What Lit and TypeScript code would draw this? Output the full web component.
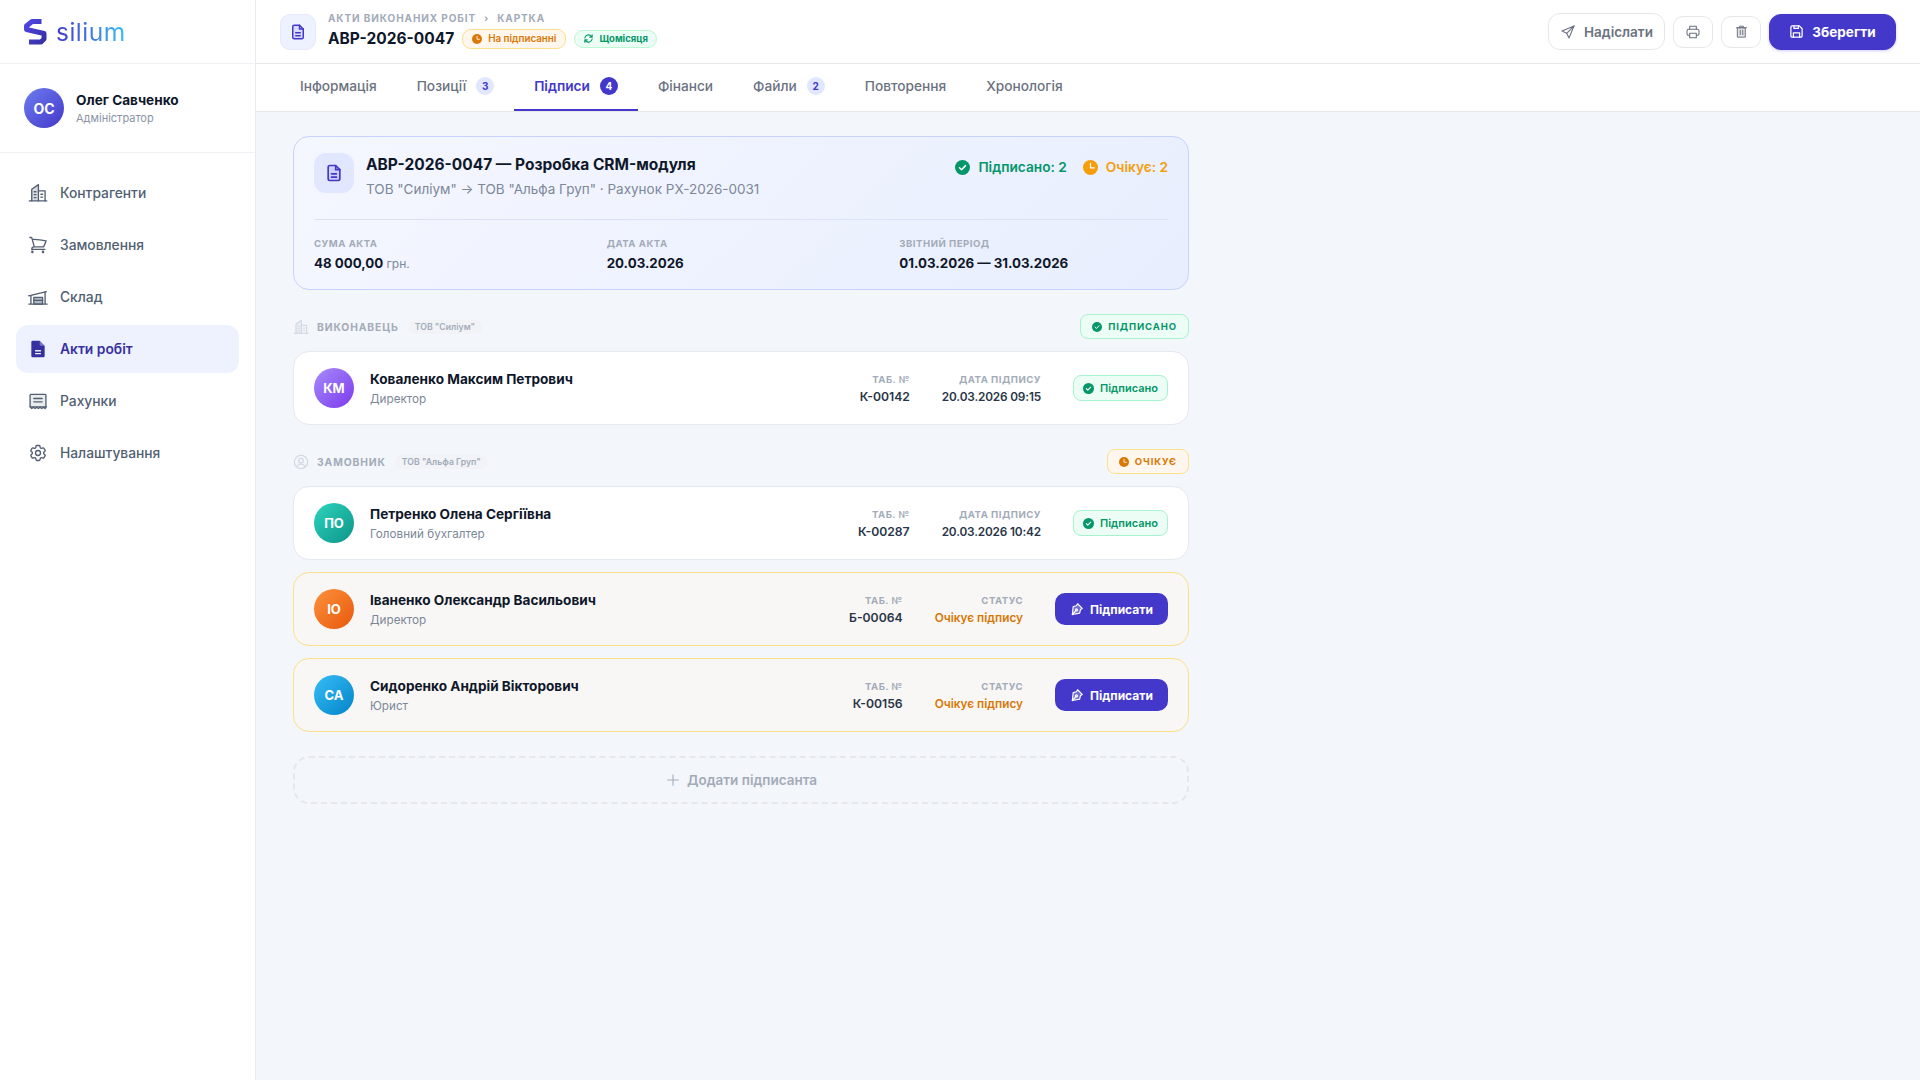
import { LitElement, html, css, svg } from 'lit';
import { customElement, state } from 'lit/decorators.js';
import { classMap } from 'lit/directives/class-map.js';

// icons
const ic = (size: number, body: unknown, cls = '') => html`<svg class=${cls} width=${size} height=${size} viewBox="0 0 24 24" fill="none" stroke="currentColor" stroke-width="1.6" stroke-linecap="round" stroke-linejoin="round">${body}</svg>`;

const building = svg`<path d="M1.500 21.500h21" /><path d="M4.500 21.500V7.500L12.500 2v19.500" fill="currentColor" fill-opacity=".22"/><path d="M12.500 9.500h8v12" /><path d="M7.500 10.500h2M7.500 14h2M7.500 17.500h2M15.500 13.500h2M15.500 17h2" />`;
const cart = svg`<path d="M2.250 3h1.386c.51 0 .955.343 1.087.835l.383 1.437M7.500 14.250a3 3 0 0 0-3 3h15.750m-12.750-3h11.218c1.121-2.300 2.100-4.684 2.924-7.138a60.114 60.114 0 0 0-16.536-1.840M7.500 14.250 5.106 5.272M6 20.250a.75.75 0 1 1-1.500 0 .75.75 0 0 1 1.500 0Zm12.750 0a.75.75 0 1 1-1.500 0 .75.75 0 0 1 1.500 0Z"/>`;
const store = svg`<path d="M1 20.500h22M3.500 20.500V10L22 5.500M1 10.500l2.500-.5M20.500 6v14.500"/><path d="M7 20.500V12.500h10.500v8z" fill="currentColor" fill-opacity=".45"/><path d="M7 16h10.500"/>`;
const docSolid = svg`<path fill="currentColor" stroke="none" d="M6 2h8l6 6v12.500a1.500 1.500 0 0 1-1.500 1.500h-13A1.500 1.500 0 0 1 4 20.500v-17A1.500 1.500 0 0 1 5.500 2Z"/><path stroke="#eef2ff" stroke-width="1.700" stroke-linecap="butt" d="M8.500 14h7M8.500 17.500h7"/><path fill="#eef2ff" stroke="none" d="M14 2v4.500A1.500 1.500 0 0 0 15.500 8H20l-.5-.5Z" opacity=".35"/>`;
const receipt = svg`<rect x="2.500" y="4" width="19" height="15" rx="1" fill="currentColor" fill-opacity=".12"/><path d="M7 9h10M7 13h10M2.500 19l2 2 2-1.500 2 1.500 2-1.500 2 1.500 2-1.500 2 1.500 2-1.500 2 1.500 1.500-2"/>`;
const cog = svg`<path d="M9.594 3.940c.09-.542.56-.94 1.110-.94h2.593c.55 0 1.020.398 1.110.94l.213 1.281c.063.374.313.686.645.87.074.04.147.083.22.127.325.196.72.257 1.075.124l1.217-.456a1.125 1.125 0 0 1 1.370.49l1.296 2.247a1.125 1.125 0 0 1-.26 1.431l-1.003.827c-.293.241-.438.613-.43.992a7.723 7.723 0 0 1 0 .255c-.008.378.137.75.43.991l1.004.827c.424.35.534.955.26 1.430l-1.298 2.247a1.125 1.125 0 0 1-1.369.491l-1.217-.456c-.355-.133-.75-.072-1.076.124a6.470 6.470 0 0 1-.22.128c-.331.183-.581.495-.644.869l-.213 1.281c-.09.543-.56.94-1.110.94h-2.594c-.55 0-1.019-.398-1.110-.94l-.213-1.281c-.062-.374-.312-.686-.644-.87a6.520 6.520 0 0 1-.22-.127c-.325-.196-.72-.257-1.076-.124l-1.217.456a1.125 1.125 0 0 1-1.369-.49l-1.297-2.247a1.125 1.125 0 0 1 .26-1.431l1.004-.827c.292-.24.437-.613.43-.991a6.932 6.932 0 0 1 0-.255c.007-.38-.138-.751-.43-.992l-1.004-.827a1.125 1.125 0 0 1-.26-1.430l1.297-2.247a1.125 1.125 0 0 1 1.370-.491l1.216.456c.356.133.751.072 1.076-.124.072-.044.146-.086.22-.128.332-.183.582-.495.644-.869l.214-1.280Z"/><path d="M15 12a3 3 0 1 1-6 0 3 3 0 0 1 6 0Z"/>`;
const docLine = svg`<path fill="currentColor" fill-opacity=".12" stroke-width="2" d="M14 3H7a2 2 0 0 0-2 2v14a2 2 0 0 0 2 2h10a2 2 0 0 0 2-2V8Z"/><path stroke-width="2" d="M14 3v5h5M9 13h6M9 17h6"/>`;
const send = svg`<path d="M21 3 3 10.500l7 3.500 3.500 7Z"/><path d="M21 3 10 14"/>`;
const printer = svg`<path d="M7 8V3.500h10V8"/><rect x="3" y="8" width="18" height="9" rx="2.500" /><path d="M7 14h10v6.500H7z" fill="#fff"/>`;
const trash = svg`<path d="M4 6h16M9 6V3.500h6V6"/><path d="M6 6h12v15H6z" fill="currentColor" fill-opacity=".18"/><path d="M10 10v7M14 10v7"/>`;
const save = svg`<path stroke-width="2" d="M5 3h11.500L21 7.500V19a2 2 0 0 1-2 2H5a2 2 0 0 1-2-2V5a2 2 0 0 1 2-2Z"/><path stroke-width="2" d="M7 21v-7h10v7M8 3v4h7V3"/>`;
const pen = svg`<path fill="currentColor" fill-opacity=".25" stroke-width="2" d="m13 3 8 8-3 2-1.500 6L4 21.500 5.500 8 11 6.500Z"/><path stroke-width="2" d="M4 21.500 10 15"/><circle cx="11" cy="13.500" r="1.800" stroke-width="2"/>`;
const recur = svg`<path stroke-width="2.400" d="M4 11a8 8 0 0 1 14-4l2 2M20 4v5h-5M20 13a8 8 0 0 1-14 4l-2-2M4 20v-5h5"/>`;
const userRound = svg`<circle cx="12" cy="12" r="10"/><circle cx="12" cy="10" r="3.500"/><path d="M6 18.500c1.500-2.500 3.500-3.500 6-3.500s4.500 1 6 3.500"/>`;
const plus = svg`<path d="M12 4v16M4 12h16"/>`;

const dotCheck = (size: number) => html`<svg width=${size} height=${size} viewBox="0 0 20 20"><circle cx="10" cy="10" r="10" fill="currentColor"/><path d="m6 10.300 2.800 2.700L14 7.500" fill="none" stroke="#fff" stroke-width="2" stroke-linecap="round" stroke-linejoin="round"/></svg>`;
const dotClock = (size: number) => html`<svg width=${size} height=${size} viewBox="0 0 20 20"><circle cx="10" cy="10" r="10" fill="currentColor"/><path d="M10 4.500v6h5" fill="none" stroke="#fff" stroke-width="1.600" stroke-linecap="round" stroke-linejoin="round"/></svg>`;

type Signer = { initials: string; grad: string; name: string; role: string; tab: string; date?: string };

@customElement('app-root')
export class AppRoot extends LitElement {
  @state() nav = [
    { label: 'Контрагенти', icon: building },
    { label: 'Замовлення', icon: cart },
    { label: 'Склад', icon: store },
    { label: 'Акти робіт', icon: docSolid, active: true },
    { label: 'Рахунки', icon: receipt },
    { label: 'Налаштування', icon: cog },
  ];

  @state() tabs = [
    { label: 'Інформація' },
    { label: 'Позиції', count: 3 },
    { label: 'Підписи', count: 4, active: true },
    { label: 'Фінанси' },
    { label: 'Файли', count: 2 },
    { label: 'Повторення' },
    { label: 'Хронологія' },
  ];

  static styles = css`
    :host {
      display: block;
      font-family: Inter, 'Noto Sans', sans-serif;
      color: #0f172a;
    }
    * { box-sizing: border-box; }
    svg { flex: none; display: block; }

    .app { display: flex; height: 1080px; background: #f3f6fa; overflow: hidden; }

    .side { width: 256px; flex: none; background: #fff; border-right: 1px solid #e8eaef; }
    .logo { height: 64px; padding-left: 24px; display: flex; align-items: center; gap: 9px; border-bottom: 1px solid #eef0f3; }
    .logo-text {
      font-family: Inter, sans-serif; font-size: 24.500px; font-weight: 400; letter-spacing: .5px;
      background: linear-gradient(90deg, #4338ca, #38bdf8);
      -webkit-background-clip: text; background-clip: text; color: transparent;
    }
    .me { height: 89px; padding: 0 24px; display: flex; align-items: center; gap: 12px; border-bottom: 1px solid #eef0f3; }
    .me-av { width: 40px; height: 40px; border-radius: 50%; display: flex; align-items: center; justify-content: center; color: #fff; font-size: 14px; font-weight: 700; background: linear-gradient(135deg, #6d7cf0, #4338ca); }
    .me-name { font-size: 13.600px; font-weight: 700; line-height: 18px; }
    .me-role { font-size: 11px; color: #8a94a6; line-height: 16px; margin-top: 1px; }
    .nav { padding: 16px; display: flex; flex-direction: column; gap: 4px; }
    .nav-item { height: 48px; padding: 0 12px; border-radius: 12px; display: flex; align-items: center; gap: 12px; font-size: 13.800px; font-weight: 500; color: #525f73; }
    .nav-item svg { color: #525f73; }
    .nav-item.on { background: #eef2ff; color: #3730a3; font-weight: 600; }
    .nav-item.on svg { color: #3730a3; }

    .main { flex: 1; min-width: 0; }
    .top { height: 64px; padding: 0 24px; background: #fff; border-bottom: 1px solid #e5e7eb; display: flex; align-items: center; gap: 12px; }
    .top-icon { width: 36px; height: 36px; border-radius: 10px; background: #eef2ff; border: 1px solid #e4e9fb; color: #4338ca; display: flex; align-items: center; justify-content: center; }
    .head-text { margin-top: -3px; }
    .crumbs { display: flex; align-items: center; gap: 8px; font-size: 10px; font-weight: 700; letter-spacing: .9px; color: #a3abb9; text-transform: uppercase; line-height: 14px; }
    .head-line { display: flex; align-items: center; gap: 8px; margin-top: 3px; }
    .title { font-size: 15.500px; font-weight: 700; line-height: 22px; }
    .tag { display: inline-flex; align-items: center; gap: 6px; border-radius: 9px; font-weight: 600; border: 1px solid; }
    .tag.amber { height: 20px; padding: 0 9px; font-size: 9.800px; color: #d97706; background: #fff7ed; border-color: #fde08a; }
    .tag.green { height: 18px; padding: 0 8px; gap: 5px; font-size: 9.500px; font-weight: 700; color: #059669; background: #ecfdf5; border-color: #bbf7d0; }
    .top-right { margin-left: auto; display: flex; align-items: center; gap: 8px; }
    .btn { display: flex; align-items: center; justify-content: center; gap: 8px; background: #fff; color: #6b7280; border: 1px solid #e5e7eb; border-radius: 12px; font-size: 13.500px; font-weight: 600; }
    .btn.send { width: 117px; height: 37px; }
    .btn.sq { width: 40px; height: 32px; border-radius: 10px; }
    .btn.save { width: 127px; height: 36px; background: #4338ca; border-color: #4338ca; color: #fff; font-weight: 700; box-shadow: 0 1px 3px rgba(67,56,202,.25); }

    .tabs { height: 48px; padding: 0 24px; background: #fff; border-bottom: 1px solid #e5e7eb; display: flex; }
    .tab { height: 47px; padding: 0 20px 1px; display: flex; align-items: center; gap: 10px; font-size: 13.700px; font-weight: 500; color: #6b7280; border-bottom: 2px solid transparent; }
    .tab.on { color: #4338ca; font-weight: 600; border-bottom-color: #4338ca; }
    .count { width: 18px; height: 18px; border-radius: 50%; background: #e0e7ff; color: #4338ca; font-size: 10px; font-weight: 700; display: flex; align-items: center; justify-content: center; }
    .tab.on .count { background: #4338ca; color: #fff; }

    .content { padding: 24px 37px 0; width: 970px; display: flex; flex-direction: column; }
    .summary { height: 154px; padding: 16px 20px 20px; border: 1px solid #c7d2fe; border-radius: 16px; background: linear-gradient(135deg, #f5f7ff, #e8eefe); }
    .sum-top { display: flex; gap: 12px; height: 67px; border-bottom: 1px solid #dbe2f5; }
    .sum-icon { width: 40px; height: 40px; border-radius: 12px; background: #e0e7ff; color: #4338ca; display: flex; align-items: center; justify-content: center; }
    .sum-title { font-size: 15.500px; font-weight: 700; line-height: 20px; margin-top: 2px; }
    .sum-sub { font-size: 13.500px; color: #7c8798; line-height: 18px; margin-top: 5px; }
    .sum-stats { margin-left: auto; display: flex; gap: 16px; font-size: 13.700px; font-weight: 600; height: 22px; margin-top: 3px; }
    .stat { display: flex; align-items: center; gap: 8px; }
    .stat.ok { color: #059669; }
    .stat.wait { color: #f59e0b; }
    .sum-grid { display: grid; grid-template-columns: repeat(3, 1fr); gap: 24px; margin-top: 17px; }
    .lbl { font-size: 9.600px; font-weight: 700; letter-spacing: .5px; color: #a3abb9; text-transform: uppercase; line-height: 14px; }
    .val { font-size: 13.300px; font-weight: 700; line-height: 20px; margin-top: 2px; }
    .val small { font-size: 12px; font-weight: 400; color: #7c8798; }

    .sec { display: flex; align-items: center; height: 25px; margin: 24px 0 12px; color: #a3abb9; }
    .sec > svg { color: #cfd5df; }
    .sec-name { margin-left: 8px; font-size: 10.300px; font-weight: 700; letter-spacing: .9px; text-transform: uppercase; }
    .chip { margin-left: 9px; padding: 2px 7px; border-radius: 8px; font-size: 8.700px; font-weight: 600; background: #f1f3f7; color: #a3abb9; }
    .sec-badge { margin-left: auto; height: 25px; padding: 0 11px; border-radius: 8px; border: 1px solid; display: flex; align-items: center; gap: 6px; font-size: 9.500px; font-weight: 700; letter-spacing: .9px; text-transform: uppercase; }
    .sec-badge.ok { color: #059669; background: #ecfdf5; border-color: #a7f3d0; }
    .sec-badge.wait { color: #d97706; background: #fff7ed; border-color: #fde08a; }

    .rows { display: flex; flex-direction: column; gap: 12px; }
    .row { height: 74px; padding: 0 20px; border-radius: 16px; border: 1px solid #e5e9f0; background: #fff; display: flex; align-items: center; gap: 16px; }
    .row.pending { background: #f8f7f5; border-color: #fde08a; }
    .av { width: 40px; height: 40px; border-radius: 50%; color: #fff; font-size: 13px; font-weight: 700; display: flex; align-items: center; justify-content: center; }
    .who { flex: 1; min-width: 0; }
    .name { font-size: 13.600px; font-weight: 700; line-height: 19px; }
    .role { font-size: 11.700px; color: #7c8798; line-height: 16px; margin-top: 2px; }
    .col { text-align: right; margin-left: 16px; padding-top: 3px; }
    .col .v { font-size: 12.200px; font-weight: 600; color: #293548; line-height: 18px; margin-top: 1px; }
    .col .v.tight { font-size: 11.800px; letter-spacing: -.15px; }
    .col .v.amber { font-size: 11.800px; letter-spacing: 0; color: #d97706; }
    .pill { margin-left: 16px; width: 95px; height: 26px; border-radius: 8px; border: 1px solid #a7f3d0; background: #ecfdf5; color: #059669; font-size: 11px; font-weight: 600; display: flex; align-items: center; justify-content: center; gap: 6px; }
    .sign { margin-left: 16px; width: 113px; height: 32px; border-radius: 10px; background: #4338ca; color: #fff; font-size: 12px; font-weight: 700; display: flex; align-items: center; justify-content: center; gap: 6px; }

    .add { height: 48px; margin-top: 24px; border-radius: 16px; border: 2px dashed #e5e7eb; color: #a3abb9; font-size: 13.500px; font-weight: 600; display: flex; align-items: center; justify-content: center; gap: 6px; }
  `;

  private signerRow(s: Signer) {
    const pending = !s.date;
    return html`<div class=${classMap({ row: true, pending })}>
      <div class="av" style="background:${s.grad}">${s.initials}</div>
      <div class="who"><div class="name">${s.name}</div><div class="role">${s.role}</div></div>
      <div class="col"><div class="lbl">Таб. №</div><div class="v">${s.tab}</div></div>
      <div class="col"><div class="lbl">${pending ? 'Статус' : 'Дата підпису'}</div><div class=${classMap({ v: true, tight: true, amber: pending })}>${pending ? 'Очікує підпису' : s.date}</div></div>
      ${pending
        ? html`<div class="sign">${ic(14, pen)}Підписати</div>`
        : html`<div class="pill">${dotCheck(11)}Підписано</div>`}
    </div>`;
  }

  render() {
    return html`<div class="app">
      <aside class="side">
        <div class="logo">
          <svg width="23" height="26" viewBox="0 0 23 26" fill="none">
            <defs><linearGradient id="lg" x1="0" y1="0" x2="1" y2="1"><stop offset="0" stop-color="#4f46e5"/><stop offset="1" stop-color="#3730a3"/></linearGradient></defs>
            <path d="M17.500 2.500H8L2.500 7v3.500L20 14.500V20l-3 3H5" stroke="url(#lg)" stroke-width="5" stroke-linejoin="round"/>
          </svg>
          <span class="logo-text">silium</span>
        </div>
        <div class="me">
          <div class="me-av">ОС</div>
          <div><div class="me-name">Олег Савченко</div><div class="me-role">Адміністратор</div></div>
        </div>
        <nav class="nav">
          ${this.nav.map((n) => html`<div class=${classMap({ 'nav-item': true, on: !!n.active })}>${ic(20, n.icon)}<span>${n.label}</span></div>`)}
        </nav>
      </aside>
      <div class="main">
        <header class="top">
          <div class="top-icon">${ic(18, docLine)}</div>
          <div class="head-text">
            <div class="crumbs"><span>Акти виконаних робіт</span><span>›</span><span>Картка</span></div>
            <div class="head-line">
              <span class="title">АВР-2026-0047</span>
              <span class="tag amber">${dotClock(10)}На підписанні</span>
              <span class="tag green">${ic(11, recur)}Щомісяця</span>
            </div>
          </div>
          <div class="top-right">
            <div class="btn send">${ic(16, send)}Надіслати</div>
            <div class="btn sq">${ic(16, printer)}</div>
            <div class="btn sq">${ic(15, trash)}</div>
            <div class="btn save">${ic(15, save)}Зберегти</div>
          </div>
        </header>
        <div class="tabs">
          ${this.tabs.map((t) => html`<div class=${classMap({ tab: true, on: !!t.active })}>${t.label}${t.count ? html`<span class="count">${t.count}</span>` : ''}</div>`)}
        </div>
        <div class="content">
          <section class="summary">
            <div class="sum-top">
              <div class="sum-icon">${ic(20, docLine)}</div>
              <div>
                <div class="sum-title">АВР-2026-0047 — Розробка CRM-модуля</div>
                <div class="sum-sub">ТОВ "Силіум" → ТОВ "Альфа Груп" · Рахунок РХ-2026-0031</div>
              </div>
              <div class="sum-stats">
                <div class="stat ok">${dotCheck(15)}Підписано: 2</div>
                <div class="stat wait">${dotClock(15)}Очікує: 2</div>
              </div>
            </div>
            <div class="sum-grid">
              <div><div class="lbl">Сума акта</div><div class="val">48 000,00 <small>грн.</small></div></div>
              <div><div class="lbl">Дата акта</div><div class="val">20.03.2026</div></div>
              <div><div class="lbl">Звітний період</div><div class="val">01.03.2026 — 31.03.2026</div></div>
            </div>
          </section>

          <div class="sec">
            ${ic(16, building)}<span class="sec-name">Виконавець</span><span class="chip">ТОВ "Силіум"</span>
            <div class="sec-badge ok">${dotCheck(10)}Підписано</div>
          </div>
          <div class="rows">
            ${this.signerRow({ initials: 'КМ', grad: 'linear-gradient(135deg,#a78bfa,#7c3aed)', name: 'Коваленко Максим Петрович', role: 'Директор', tab: 'К-00142', date: '20.03.2026 09:15' })}
          </div>

          <div class="sec">
            ${ic(16, userRound)}<span class="sec-name">Замовник</span><span class="chip">ТОВ "Альфа Груп"</span>
            <div class="sec-badge wait">${dotClock(10)}Очікує</div>
          </div>
          <div class="rows">
            ${this.signerRow({ initials: 'ПО', grad: 'linear-gradient(135deg,#2dd4bf,#0d9488)', name: 'Петренко Олена Сергіївна', role: 'Головний бухгалтер', tab: 'К-00287', date: '20.03.2026 10:42' })}
            ${this.signerRow({ initials: 'ІО', grad: 'linear-gradient(135deg,#fb923c,#ea580c)', name: 'Іваненко Олександр Васильович', role: 'Директор', tab: 'Б-00064' })}
            ${this.signerRow({ initials: 'СА', grad: 'linear-gradient(135deg,#38bdf8,#0284c7)', name: 'Сидоренко Андрій Вікторович', role: 'Юрист', tab: 'К-00156' })}
          </div>

          <div class="add">${ic(16, plus)}Додати підписанта</div>
        </div>
      </div>
    </div>`;
  }
}
